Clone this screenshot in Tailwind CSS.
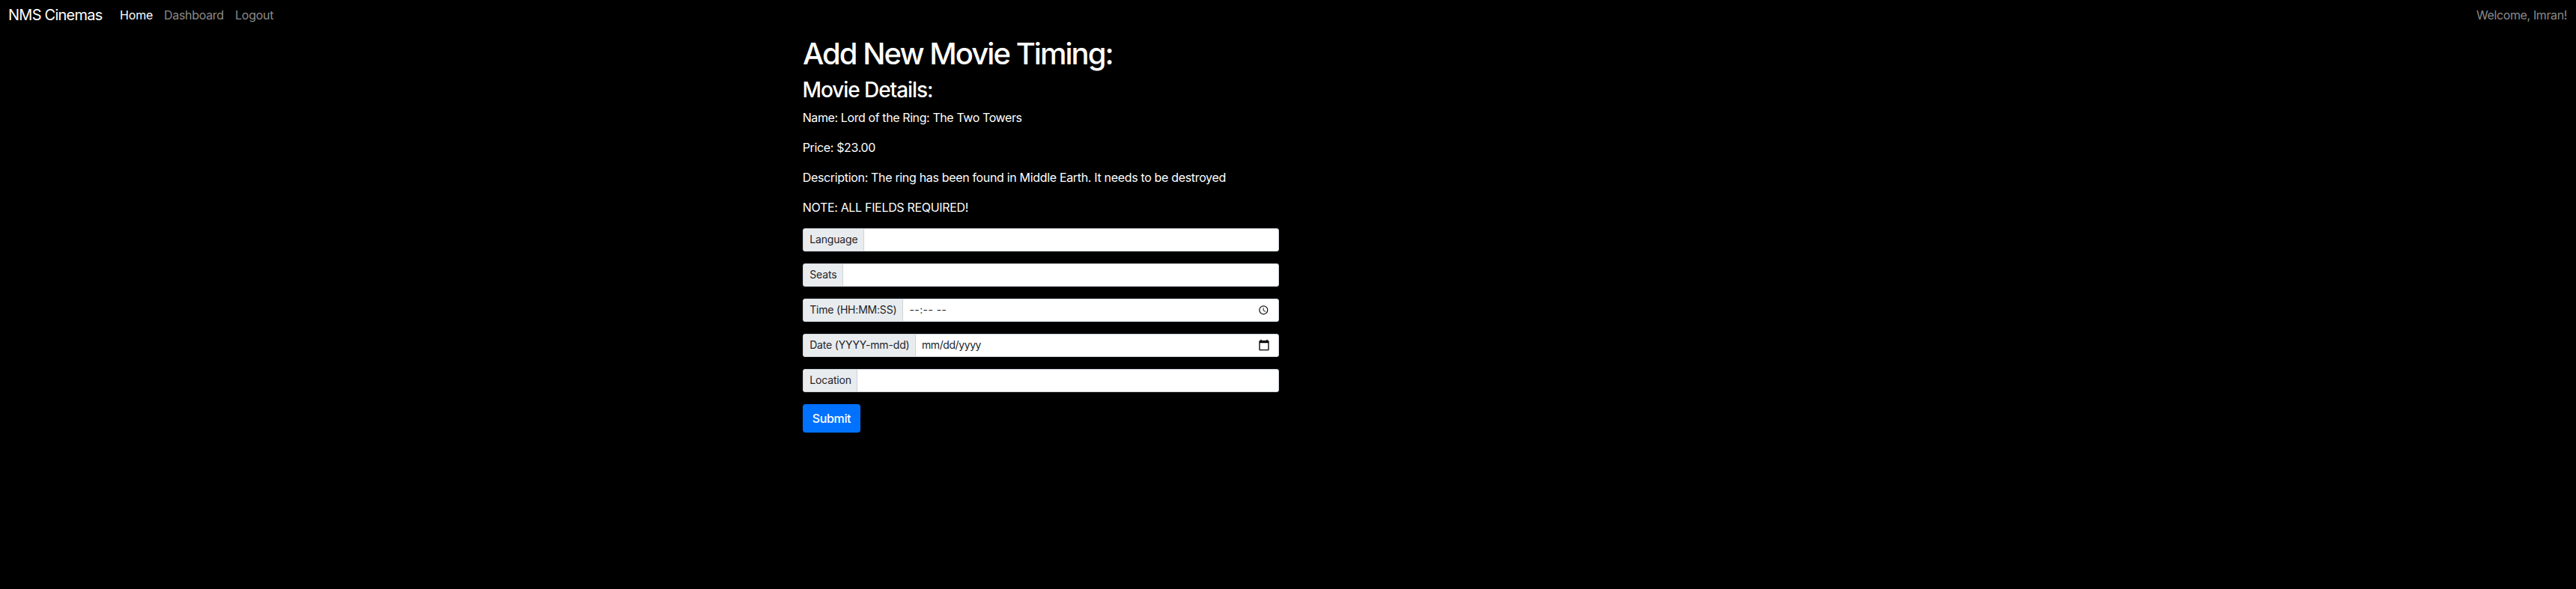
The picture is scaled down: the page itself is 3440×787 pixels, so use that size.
<!DOCTYPE html>
<html lang="en"><head><meta charset="utf-8"><title>NMS Cinemas</title>
<script src="https://cdn.jsdelivr.net/npm/@tailwindcss/browser@4"></script></head>
<body class="min-h-screen bg-black font-['Inter',sans-serif] text-base leading-6 text-white">
<nav class="flex h-[39px] items-center pl-[11px] pr-3 text-[#8a8a8a]">
  <a class="w-[149px] text-xl tracking-[-0.75px] text-white">NMS Cinemas</a>
  <a class="w-[59px] tracking-[-0.15px] text-white">Home</a>
  <a class="w-[95px] tracking-[-0.3px]">Dashboard</a>
  <a class="tracking-[-0.25px]">Logout</a>
  <span class="ml-auto tracking-[-0.38px]">Welcome, Imran!</span>
</nav>
<main class="ml-[1072px] w-[636px] pt-[8.6px]">
  <h1 class="mb-2 whitespace-nowrap text-[40px] leading-[48px] font-medium tracking-[-1.97px]">Add New Movie Timing:</h1>
  <h2 class="mb-2 -ml-[0.5px] text-[28px] leading-[33.6px] font-medium tracking-[-1.07px]">Movie Details:</h2>
  <div class="-ml-[0.3px] flex flex-col gap-4">
    <p class="tracking-[-0.4px]">Name: Lord of the Ring: The Two Towers</p>
    <p class="tracking-[-0.35px]">Price: $23.00</p>
    <p class="whitespace-nowrap tracking-[-0.33px]">Description: The ring has been found in Middle Earth. It needs to be destroyed</p>
    <p class="tracking-[-0.32px]">NOTE: ALL FIELDS REQUIRED!</p>
  </div>
  <form class="mt-[15.8px] flex flex-col items-start gap-4 text-sm text-[#212529]">
    <div class="flex h-[31px] w-full overflow-hidden rounded-[3px] border border-[#ced4da] bg-white">
      <label class="flex w-[81px] items-center whitespace-nowrap border-r border-[#ced4da] bg-[#e9ecef] pl-[8.2px] tracking-[-0.15px]">Language</label>
    </div>
    <div class="flex h-[31px] w-full overflow-hidden rounded-[3px] border border-[#ced4da] bg-white">
      <label class="flex w-[53px] items-center whitespace-nowrap border-r border-[#ced4da] bg-[#e9ecef] pl-[8.2px] tracking-[-0.1px]">Seats</label>
    </div>
    <div class="flex h-[31px] w-full items-stretch overflow-hidden rounded-[3px] border border-[#ced4da] bg-white">
      <label class="flex w-[133px] items-center whitespace-nowrap border-r border-[#ced4da] bg-[#e9ecef] pl-[8.2px] tracking-[-0.2px]">Time (HH:MM:SS)</label>
      <span class="flex flex-1 items-center pl-[8.5px] tracking-[0.4px]">--:-- --</span>
      <svg class="mr-3 size-[14.6px] self-center" viewBox="0 0 24 24" fill="#111"><path d="M12 2a10 10 0 1 0 0 20 10 10 0 0 0 0-20zm0 18a8 8 0 1 1 0-16 8 8 0 0 1 0 16zm.5-13H11v6l5.2 3.2.8-1.3-4.5-2.7z"/></svg>
    </div>
    <div class="flex h-[31px] w-full items-stretch overflow-hidden rounded-[3px] border border-[#ced4da] bg-white">
      <label class="flex w-[150px] items-center whitespace-nowrap border-r border-[#ced4da] bg-[#e9ecef] pl-[8.2px] tracking-[-0.17px]">Date (YYYY-mm-dd)</label>
      <span class="flex flex-1 items-center pl-[8px] tracking-[-0.42px]">mm/dd/yyyy</span>
      <svg class="mr-[11px] size-4 self-center" viewBox="0 0 24 24" fill="#000"><path d="M20 3h-1V1h-2v2H7V1H5v2H4c-1.1 0-2 .9-2 2v16c0 1.1.9 2 2 2h16c1.1 0 2-.9 2-2V5c0-1.1-.9-2-2-2zm0 18H4V8h16v13z"/></svg>
    </div>
    <div class="flex h-[31px] w-full overflow-hidden rounded-[3px] border border-[#ced4da] bg-white">
      <label class="flex w-[72px] items-center whitespace-nowrap border-r border-[#ced4da] bg-[#e9ecef] pl-[8.2px] tracking-[-0.15px]">Location</label>
    </div>
    <button type="button" class="h-[38px] w-[77px] rounded bg-[#0072ff] text-base font-medium tracking-[-0.35px] text-white">Submit</button>
  </form>
</main>
</body></html>
